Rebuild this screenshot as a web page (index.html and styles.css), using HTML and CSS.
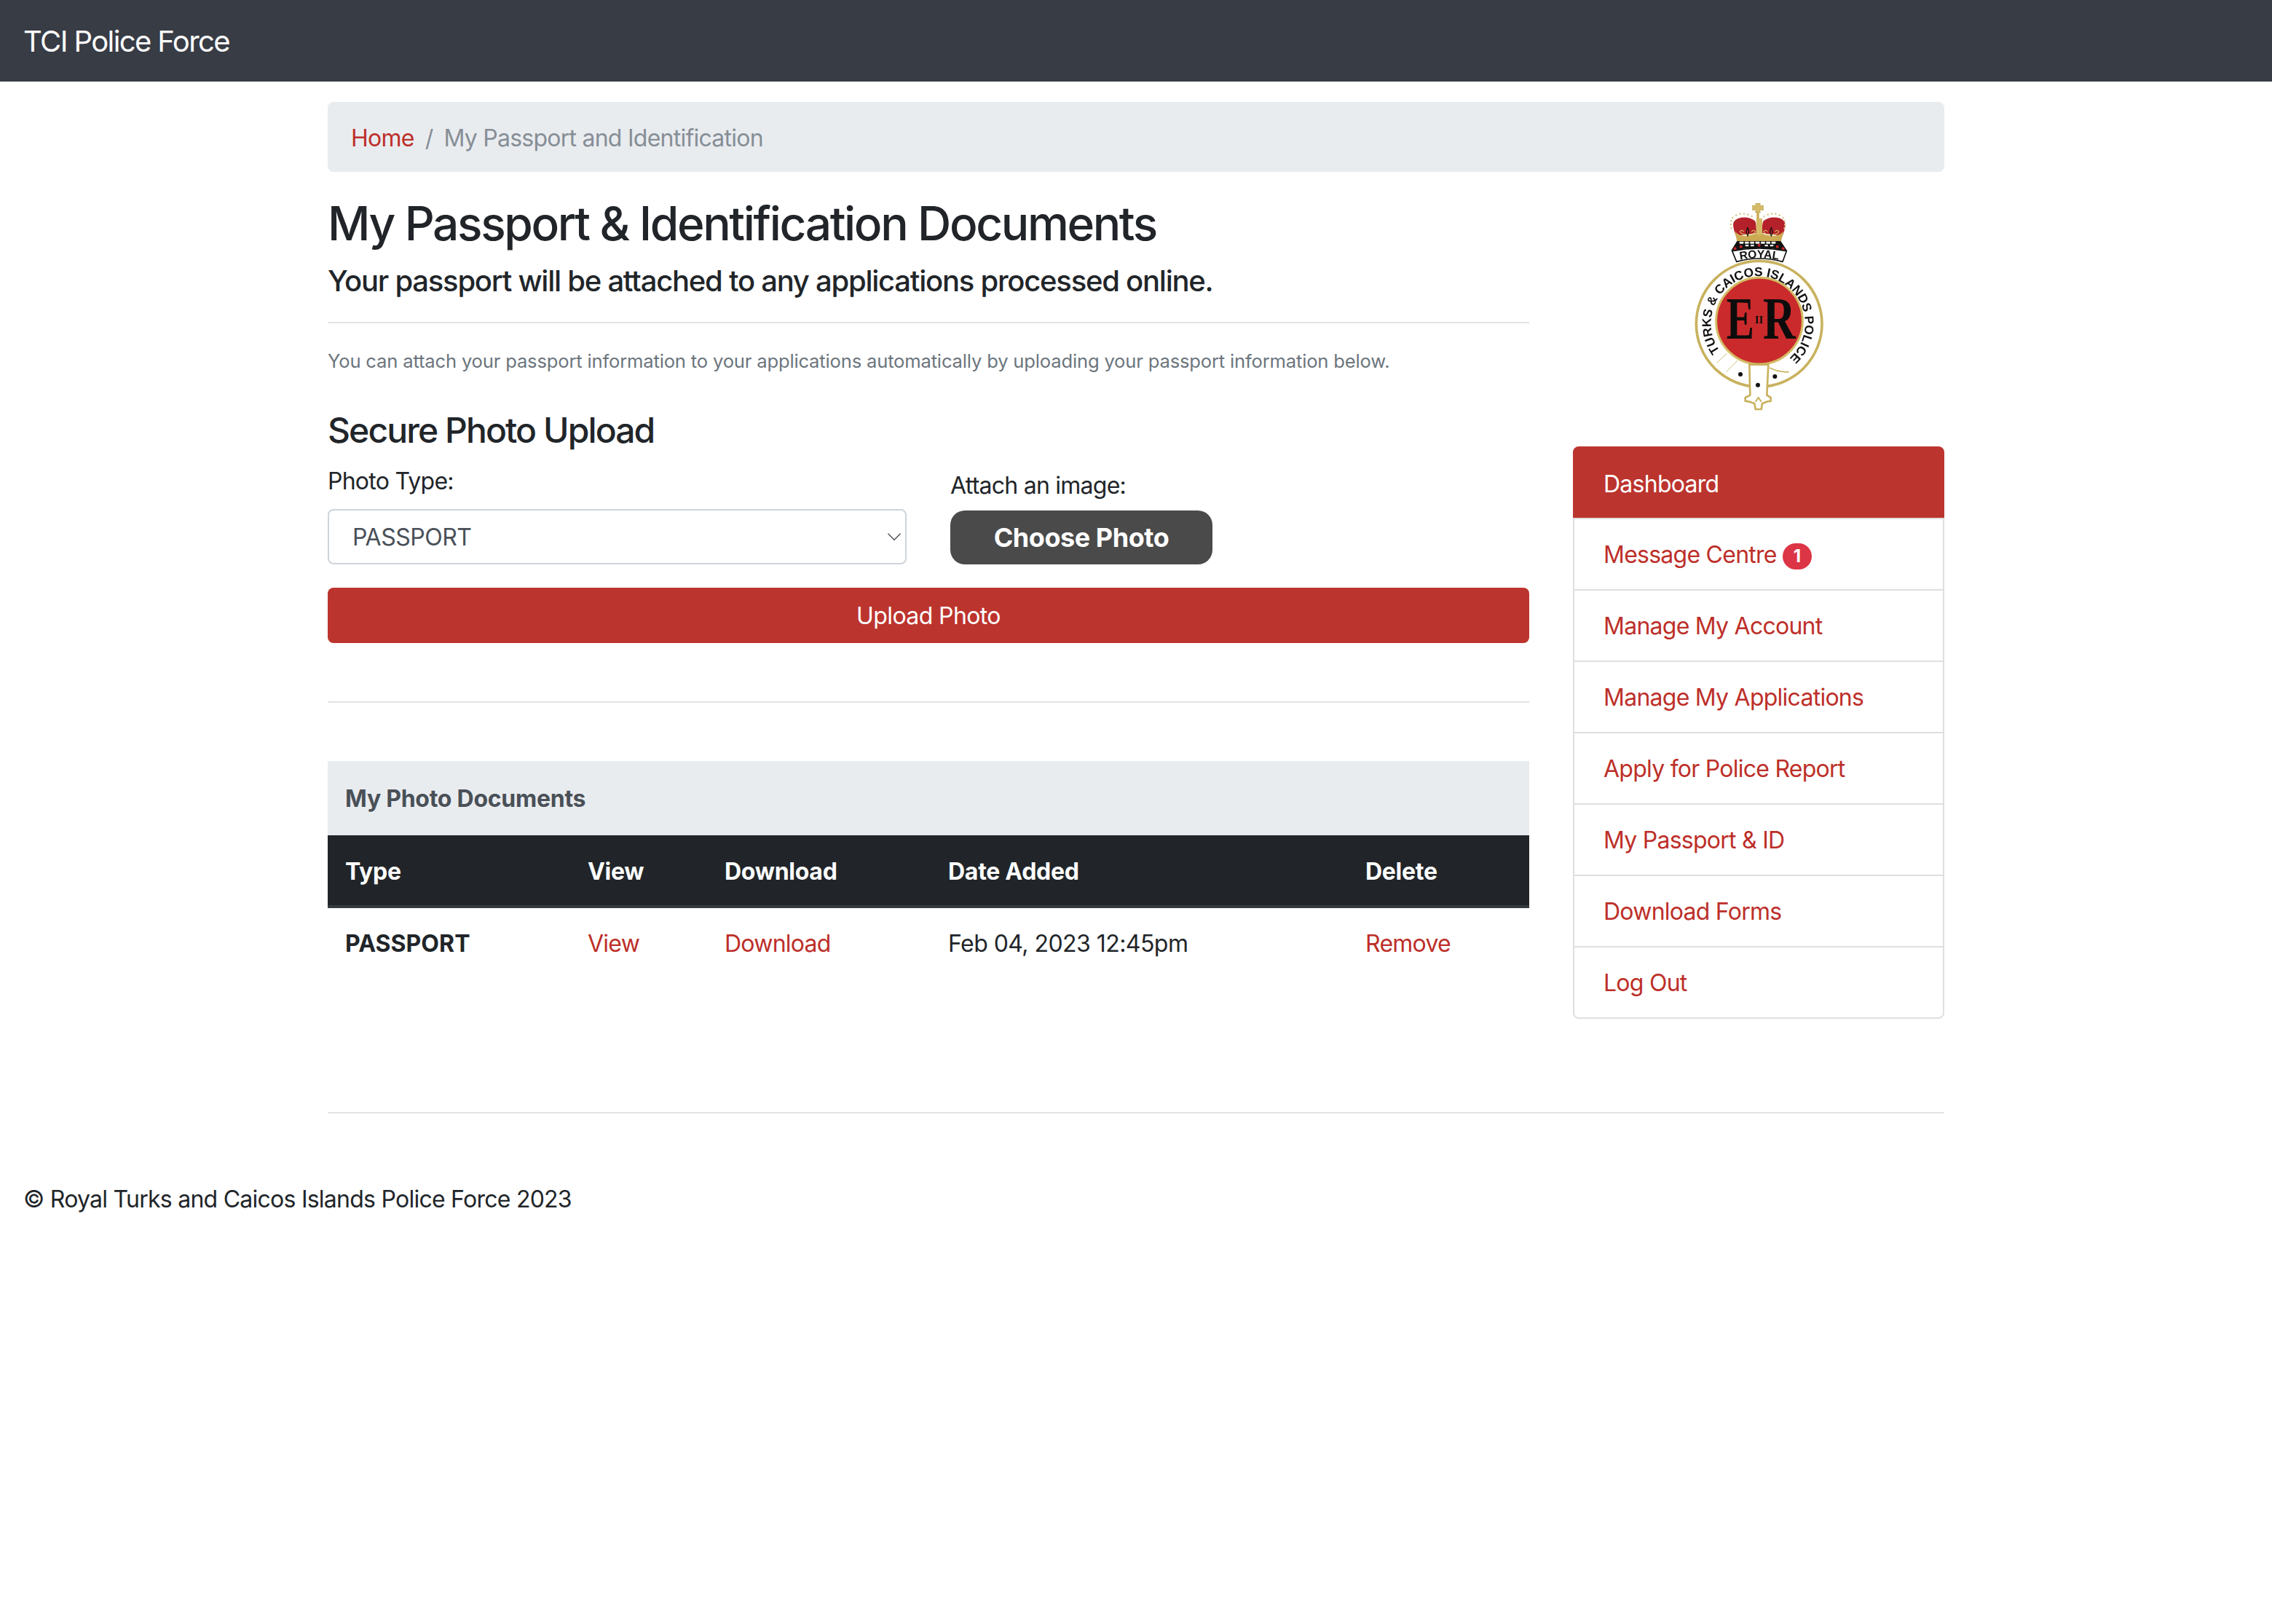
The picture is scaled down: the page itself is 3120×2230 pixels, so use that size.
FILE: index.html
```html
<!DOCTYPE html>
<html lang="en">
<head>
<meta charset="utf-8">
<title>My Passport &amp; Identification Documents</title>
<link rel="stylesheet" href="styles.css">
</head>
<body>
<nav class="navbar"><a class="brand" href="#">TCI Police Force</a></nav>
<div class="container">
  <ol class="breadcrumb">
    <li><a href="#">Home</a></li>
    <li class="sep">/</li>
    <li class="current">My Passport and Identification</li>
  </ol>
  <div class="layout">
    <main class="main">
      <h1>My Passport &amp; Identification Documents</h1>
      <h5>Your passport will be attached to any applications processed online.</h5>
      <hr class="rule-a">
      <p class="note">You can attach your passport information to your applications automatically by uploading your passport information below.</p>
      <h3>Secure Photo Upload</h3>
      <div class="form-row">
        <div class="field">
          <label class="label-a" for="ptype">Photo Type:</label>
          <div class="select-wrap">
            <select id="ptype" class="select"><option>PASSPORT</option></select>
            <svg class="chevron" viewBox="0 0 16 16" width="20" height="20" aria-hidden="true"><path d="M1.2 4.5L8 11.5l6.8-7" fill="none" stroke="#343a40" stroke-width="1.1"/></svg>
          </div>
        </div>
        <div class="field">
          <label class="label-b">Attach an image:</label>
          <button class="choose" type="button">Choose Photo</button>
        </div>
      </div>
      <button class="upload" type="button">Upload Photo</button>
      <hr class="rule-b">
      <div class="doc-head">My Photo Documents</div>
      <table class="docs">
        <colgroup><col class="c1"><col class="c2"><col class="c3"><col class="c4"><col class="c5"></colgroup>
        <thead><tr><th>Type</th><th>View</th><th>Download</th><th>Date Added</th><th>Delete</th></tr></thead>
        <tbody><tr><th>PASSPORT</th><td><a href="#">View</a></td><td><a href="#">Download</a></td><td class="date">Feb 04, 2023 12:45pm</td><td><a href="#">Remove</a></td></tr></tbody>
      </table>
    </main>
    <aside class="side">
      <svg class="crest" viewBox="-240 54 1530 1035" width="510" height="345" role="img" aria-label="Royal Turks and Caicos Islands Police crest">
        <g class="crest-art">
          <circle cx="527" cy="584" r="259" fill="#fff" stroke="#c9b25f" stroke-width="11"/>
          <path d="M352 745 L395 705 M392 782 L438 735" stroke="#d2c07c" stroke-width="3" fill="none"/>
          <path d="M352 772 Q420 835 483 838" stroke="#c9b25f" stroke-width="7" fill="none"/>
          <path d="M570 765 Q610 785 650 782" stroke="#c9b25f" stroke-width="5" fill="none"/>
          <circle cx="528" cy="572" r="178" fill="#ca2a2c" stroke="#d3bb63" stroke-width="9"/>
          <text class="er" transform="translate(392 645) scale(.74 1.06)" font-size="232">E</text>
          <text class="er" transform="translate(543 645) scale(.8 1.06)" font-size="232">R</text>
          <text class="er" x="510" y="581" font-size="44">II</text>
          <path id="ringArc" d="M366 696 A194 194 0 1 1 652 726" fill="none"/>
          <text class="ring-text" font-size="52"><textPath href="#ringArc" textLength="895" lengthAdjust="spacing">TURKS &amp; CAICOS ISLANDS POLICE</textPath></text>
          <path d="M487 752 L565 752 L559 878 L575 888 L575 902 L558 905 L540 912 L536 936 L512 936 L508 912 L488 905 L470 902 L470 888 L490 878 Z" fill="#fff" stroke="#c9b25f" stroke-width="8" stroke-linejoin="round"/>
          <path d="M512 905 L524 888 L536 905" fill="none" stroke="#c9b25f" stroke-width="6"/>
          <circle cx="450" cy="792" r="9" fill="#111"/>
          <circle cx="592" cy="801" r="9" fill="#111"/>
          <circle cx="522" cy="836" r="9" fill="#111"/>
          <path d="M416 284 L434 328 Q527 302 624 328 L640 284 Q527 262 416 284 Z" fill="#fff" stroke="#111" stroke-width="5"/>
          <path id="royalArc" d="M440 322 Q527 304 616 322" fill="none"/>
          <text class="royal-text" font-size="47" letter-spacing="2"><textPath href="#royalArc" startOffset="50%" text-anchor="middle">ROYAL</textPath></text>
          <path d="M412 282 L436 243 L616 243 L642 282 Q527 262 412 282 Z" fill="#111"/>
          <g fill="#f0f0f0">
            <rect x="446" y="245" width="17" height="9" rx="2"/><rect x="468" y="245" width="17" height="9" rx="2"/><rect x="490" y="245" width="17" height="9" rx="2"/><rect x="512" y="245" width="17" height="9" rx="2"/><rect x="534" y="245" width="17" height="9" rx="2"/><rect x="556" y="245" width="17" height="9" rx="2"/><rect x="578" y="245" width="17" height="9" rx="2"/>
            <rect x="470" y="258" width="14" height="7" rx="2"/><rect x="492" y="258" width="14" height="7" rx="2"/><rect x="550" y="258" width="14" height="7" rx="2"/><rect x="572" y="258" width="14" height="7" rx="2"/>
          </g>
          <g fill="#c9242b"><circle cx="428" cy="274" r="6"/><circle cx="452" cy="266" r="6"/><circle cx="527" cy="260" r="6"/><circle cx="602" cy="266" r="6"/><circle cx="626" cy="274" r="6"/></g>
          <path d="M421 185 Q416 160 440 150 Q480 138 510 160 Q516 170 516 210 L432 222 Q424 205 421 185 Z" fill="#b5212a"/>
          <path d="M634 185 Q639 160 615 150 Q575 138 545 160 Q539 170 539 210 L623 222 Q631 205 634 185 Z" fill="#b5212a"/>
          <path d="M426 202 Q442 222 470 222 Q500 222 527 205 Q554 222 584 222 Q612 222 628 202 L618 243 L436 243 Z" fill="#cbaa52"/>
          <path d="M515 150 L540 150 L540 212 L527 222 L515 212 Z" fill="#d6bb66"/>
          <g fill="none" stroke="#111" stroke-width="4" stroke-linecap="round">
            <path d="M480 188 Q470 205 480 222 Q490 205 480 188Z"/>
            <path d="M577 188 Q567 205 577 222 Q587 205 577 188Z"/>
          </g>
          <g fill="none" stroke="#d6bb66" stroke-width="3.5" stroke-linecap="round">
            <path d="M476 216 Q456 218 448 204 Q456 194 464 204"/>
            <path d="M484 216 Q504 218 512 204 Q504 194 496 204"/>
            <path d="M573 216 Q553 218 545 204 Q553 194 561 204"/>
            <path d="M581 216 Q601 218 609 204 Q601 194 593 204"/>
          </g>
          <path d="M512 88 L532 88 L530 98 L544 96 L544 116 L530 114 L532 126 L512 126 L514 114 L500 116 L500 96 L514 98 Z" fill="#d6bb66" stroke="#b79f4f" stroke-width="2"/>
          <rect x="517" y="126" width="10" height="26" fill="#c9a94f"/>
          <g fill="#d9cd98">
            <circle cx="412" cy="160" r="4"/><circle cx="410" cy="175" r="4"/><circle cx="412" cy="190" r="4"/><circle cx="418" cy="147" r="4"/><circle cx="433" cy="137" r="4"/><circle cx="449" cy="131" r="4"/><circle cx="465" cy="131" r="4"/><circle cx="481" cy="134" r="4"/><circle cx="497" cy="141" r="4"/>
            <circle cx="632" cy="160" r="4"/><circle cx="634" cy="175" r="4"/><circle cx="632" cy="190" r="4"/><circle cx="626" cy="147" r="4"/><circle cx="611" cy="137" r="4"/><circle cx="595" cy="131" r="4"/><circle cx="579" cy="131" r="4"/><circle cx="563" cy="134" r="4"/><circle cx="547" cy="141" r="4"/>
          </g>
        </g>
      </svg>
      <ul class="menu">
        <li class="menu-item active"><a href="#">Dashboard</a></li>
        <li class="menu-item"><a href="#">Message Centre</a> <span class="badge">1</span></li>
        <li class="menu-item"><a href="#">Manage My Account</a></li>
        <li class="menu-item"><a href="#">Manage My Applications</a></li>
        <li class="menu-item"><a href="#">Apply for Police Report</a></li>
        <li class="menu-item"><a href="#">My Passport &amp; ID</a></li>
        <li class="menu-item"><a href="#">Download Forms</a></li>
        <li class="menu-item"><a href="#">Log Out</a></li>
      </ul>
    </aside>
  </div>
  <hr class="rule-c">
</div>
<footer class="footer">© Royal Turks and Caicos Islands Police Force 2023</footer>
</body>
</html>
```
FILE: styles.css
```css
* { box-sizing: border-box; }
html, body { margin: 0; padding: 0; }
body {
  min-height: 2230px;
  background: #fff;
  color: #212529;
  font-family: Inter, "Liberation Sans", sans-serif;
  font-size: 32px;
  line-height: 48px;
  letter-spacing: -0.75px;
}
a { color: #bd2f29; text-decoration: none; }
.navbar { height: 112px; background: #383c45; display: flex; align-items: center; padding: 0 32px; }
.brand { color: #fff; font-size: 40px; line-height: 60px; letter-spacing: -1.6px; position: relative; top: 1px; }
.container { width: 2220px; margin: 28px 0 0 450px; }
.breadcrumb {
  list-style: none; margin: 0 0 32px; padding: 26px 32px 22px;
  display: flex; height: 96px;
  background: #e9ecef; border-radius: 8px; color: #868e96;
}
.sep { padding: 0 15px; }
.layout { display: flex; gap: 60px; align-items: flex-start; }
.main { width: 1650px; }
.side { width: 510px; }
h1 { margin: 0 0 17px; font-size: 64px; line-height: 77px; font-weight: 500; letter-spacing: -2.35px; }
h5 { margin: 0 0 32px; font-size: 40px; line-height: 48px; font-weight: 500; letter-spacing: -1.25px; }
h3 { margin: 0 0 16px; font-size: 48px; line-height: 58px; font-weight: 500; letter-spacing: -1.9px; }
hr { border: 0; border-top: 2px solid #e2e3e4; margin: 0; }
.rule-a { margin: 0 0 33px; }
.note { margin: 0 0 47px; font-size: 25.6px; line-height: 38px; color: #6c757d; letter-spacing: -0.18px; }
.form-row { display: flex; gap: 60px; padding-top: 1px; }
.field { width: 795px; }
.label-a { display: block; margin-bottom: 14px; }
.label-b { display: block; margin: 6px 0 10px; }
.select-wrap { position: relative; }
.select {
  display: block; width: 100%; height: 76px; padding: 2px 32px 0;
  appearance: none; -webkit-appearance: none;
  background: #fff; border: 2px solid #ced4da; border-radius: 8px;
  color: #495057; font: inherit; letter-spacing: -0.5px;
}
.chevron { position: absolute; right: 7px; top: 28px; }
.choose {
  display: block; width: 360px; height: 74px; padding: 0;
  background: #4a4a4a; color: #fff; border: 0; border-radius: 20px;
  font: 700 36px/48px Inter, "Liberation Sans", sans-serif; letter-spacing: -0.45px;
}
.upload {
  display: block; width: 100%; height: 76px; margin-top: 32px; padding: 2px 0 0;
  background: #bc342e; color: #fff; border: 0; border-radius: 8px;
  font: inherit; letter-spacing: -0.6px;
}
.rule-b { margin: 80px 0; }
.doc-head { height: 102px; padding: 28px 24px 26px; background: #e9ecef; color: #495057; font-weight: 700; letter-spacing: -0.26px; }
.docs { width: 100%; border-collapse: separate; border-spacing: 0; table-layout: fixed; }
.docs th, .docs td { padding: 25px 24px 23px; text-align: left; font-weight: 400; }
.docs th { font-weight: 700; letter-spacing: 0.05px; }
.docs thead th { height: 100px; padding: 26px 24px 22px; background: #212529; color: #fff; border-bottom: 4px solid #343a40; letter-spacing: -0.28px; }
.docs .date { letter-spacing: -0.55px; }
.c1 { width: 333px; } .c2 { width: 188px; } .c3 { width: 307px; } .c4 { width: 573px; } .c5 { width: 249px; }
.crest { display: block; }
.crest-art { filter: blur(0.4px); }
.er { font-family: "Liberation Serif", serif; font-weight: 700; fill: #0c0c0c; letter-spacing: 0; }
.ring-text, .royal-text { font-family: "Liberation Sans", sans-serif; font-weight: 700; fill: #111; letter-spacing: 0; }
.menu { list-style: none; margin: 0; padding: 0; }
.menu-item { height: 100px; margin-top: -2px; padding: 25px 40px 23px; border: 2px solid #dfdfdf; background: #fff; }
.menu-item:first-child { margin-top: 0; padding-top: 26px; border-radius: 8px 8px 0 0; }
.menu-item:last-child { border-radius: 0 0 8px 8px; }
.active { background: #bc342e; border-color: #bc342e; }
.active a { color: #fff; }
.badge {
  display: inline-block; min-width: 40px; padding: 6px 12px; vertical-align: 1px;
  background: #dc3545; color: #fff; border-radius: 20px;
  font-size: 24px; line-height: 24px; font-weight: 700; text-align: center; letter-spacing: 0;
}
.rule-c { margin-top: 128px; }
.footer { margin: 94px 0 0 32px; color: #212529; }
```
